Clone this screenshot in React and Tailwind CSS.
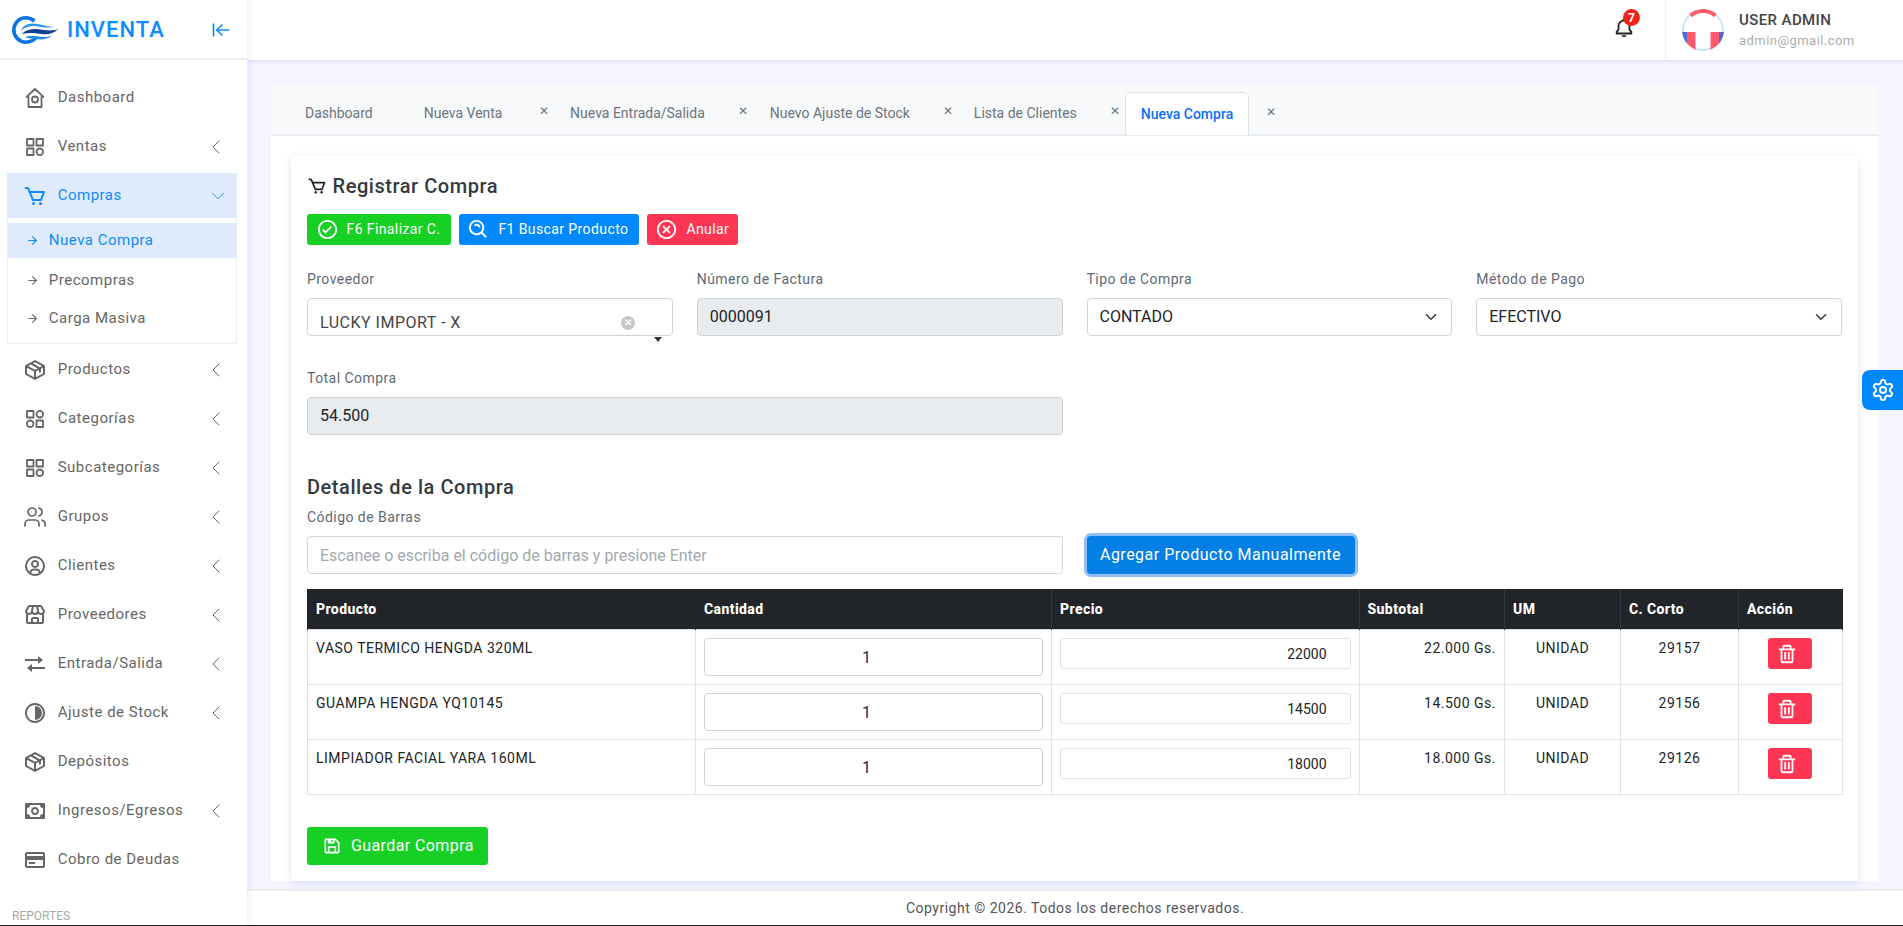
import React from "react";
import { BiCart, BiPackage, BiUserCircle, BiStore, BiTransfer, BiAdjust, BiMoney, BiCreditCard, BiCheckCircle, BiSearchAlt, BiXCircle, BiSave, BiTrash, BiBell } from "react-icons/bi";
import { LuChevronLeft, LuChevronDown, LuArrowLeftToLine, LuArrowRight, LuUsers, LuSettings } from "react-icons/lu";

const Stroke = ({ size = 24, className = "", children }) => (
  <svg width={size} height={size} viewBox="0 0 24 24" fill="none" stroke="currentColor" strokeWidth="1.8" strokeLinejoin="round" strokeLinecap="round" className={className}>{children}</svg>
);
const HomeIcon = (p) => (
  <Stroke {...p}>
    <path d="M12 3 3.500 10.800H5.500V21H18.500V10.800H20.500Z" />
    <circle cx="12" cy="13.500" r="3" />
  </Stroke>
);
const CatIcon = (p) => (
  <Stroke {...p}>
    <rect x="4" y="4" width="6.500" height="6.500" />
    <rect x="13.500" y="4" width="6.500" height="6.500" />
    <rect x="4" y="13.500" width="6.500" height="6.500" />
    <circle cx="16.800" cy="16.800" r="3.300" />
  </Stroke>
);
const CatAltIcon = (p) => (
  <Stroke {...p}>
    <rect x="4" y="4" width="6.500" height="6.500" />
    <circle cx="16.800" cy="7.200" r="3.300" />
    <circle cx="7.200" cy="16.800" r="3.300" />
    <rect x="13.500" y="13.500" width="6.500" height="6.500" />
  </Stroke>
);
const UsersIcon = (p) => <LuUsers {...p} strokeWidth={1.7} />;

const Logo = () => (
  <svg width="46" height="28" viewBox="0 0 46 28" fill="none">
    <path d="M22.500 5C19.500 2.500 16.500 1.800 14 1.800 6.800 1.800 1.800 7.500 1.800 14c0 6.800 5.500 12.200 12.200 12.200 4 0 7.500-1.500 10-4.500" stroke="#0a74e6" strokeWidth="3.600" />
    <path d="M9 14.500c1.500-4 5.500-7 11.500-7 7 0 13 3 21 3.500-5 1.200-10.500 .4-15.500-.5C21 9.500 15 10 9 14.500z" fill="#2f93ec" />
    <path d="M9.500 18c6.500-5.500 13.500-5.500 20.500-4.300 5.500 .9 10.500 1.300 16-.4-4 4-10 5.500-16 4.800-7-.8-13-1.800-20.500-.1z" fill="#123f8c" />
    <path d="M13 21.300c6-2 11-1 17-.3 4 .4 7 0 10-1.200-4 3-9 4-14 3.500-5-.5-9-1-13-2z" fill="#1b87e6" />
  </svg>
);

const Avatar = () => (
  <svg width="42" height="42" viewBox="0 0 42 42" className="shrink-0">
    <defs><clipPath id="av"><circle cx="21" cy="21" r="21" /></clipPath></defs>
    <g clipPath="url(#av)">
      <rect width="42" height="42" fill="#fff" />
      <circle cx="21" cy="21" r="20" fill="none" stroke="#c5e1fb" strokeWidth="1.800" />
      <path d="M8.500 6.500 A 19 19 0 0 1 33.500 6.500" fill="none" stroke="#ff5b6c" strokeWidth="4.500" />
      <rect x="0" y="23" width="5" height="19" fill="#5468d4" />
      <rect x="37" y="23" width="5" height="19" fill="#5468d4" />
      <rect x="5" y="23" width="8.500" height="19" fill="#ff5b6c" />
      <rect x="28.500" y="23" width="8.500" height="19" fill="#ff5b6c" />
    </g>
  </svg>
);

const menu = [
  ["Dashboard", HomeIcon, false],
  ["Ventas", CatIcon, true],
];
const menu2 = [
  ["Productos", BiPackage, true],
  ["Categorías", CatAltIcon, true],
  ["Subcategorías", CatIcon, true],
  ["Grupos", UsersIcon, true],
  ["Clientes", BiUserCircle, true],
  ["Proveedores", BiStore, true],
  ["Entrada/Salida", BiTransfer, true],
  ["Ajuste de Stock", BiAdjust, true],
  ["Depósitos", BiPackage, false],
  ["Ingresos/Egresos", BiMoney, true],
  ["Cobro de Deudas", BiCreditCard, false],
];

const Item = ({ label, Icon, arrow }) => (
  <div className="flex h-[49px] items-center pl-[23px] pr-[19.500px] text-[15px] tracking-[0.5px] text-[#666]">
    <Icon size={24} className="mr-[10.700px] shrink-0 text-[#666]" />
    <span className="flex-1">{label}</span>
    {arrow && <LuChevronLeft size={24} strokeWidth={1} />}
  </div>
);

const Sub = ({ label, active }) => (
  <div className={`flex items-center pl-[18.300px] text-[15px] tracking-[0.5px] ${active ? "mb-[3px] h-[35px] bg-[#dfebfd] text-[#0d8bff]" : "h-[38px] text-[#666]"}`}>
    <LuArrowRight size={13} className="mr-[9.500px]" />
    {label}
  </div>
);

const Sidebar = () => (
  <aside className="z-20 flex w-[247px] shrink-0 flex-col overflow-hidden bg-white shadow-[2px_0_6px_rgba(90,90,200,0.1)]">
    <div className="flex h-[60px] shrink-0 items-center border-b-2 border-[#eceef2] pl-[12px] pr-[12px] pt-[1px]">
      <Logo />
      <span className="ml-[9px] flex-1 text-[22px] font-medium tracking-[1px] text-[#0d8bff]">INVENTA</span>
      <LuArrowLeftToLine size={20} className="mr-[4.500px] text-[#0d8bff]" />
    </div>
    <div className="flex-1 overflow-hidden pt-[13px]">
      {menu.map(([l, I, a]) => <Item key={l} label={l} Icon={I} arrow={a} />)}
      <div className="ml-[7px] mr-[10px] mt-[2px] flex h-[45px] items-center bg-[#dfebfd] pl-[16px] pr-[8.500px] text-[15px] tracking-[0.5px] text-[#0d8bff]">
        <BiCart size={24} className="mr-[10.700px]" />
        <span className="flex-1">Compras</span>
        <LuChevronDown size={22} strokeWidth={1} />
      </div>
      <div className="mb-[1px] ml-[7px] mr-[10px] border-x border-b border-[#eceef2] pb-[6px] pt-[5px]">
        <Sub label="Nueva Compra" active />
        <Sub label="Precompras" />
        <Sub label="Carga Masiva" />
      </div>
      {menu2.map(([l, I, a]) => <Item key={l} label={l} Icon={I} arrow={a} />)}
      <div className="mt-[23px] pl-[12px] text-[12px] text-[#a9a9a9]">REPORTES</div>
    </div>
  </aside>
);

const Header = () => (
  <header className="z-10 flex h-[60px] shrink-0 items-center justify-end bg-white shadow-[0_2px_4px_rgba(90,90,220,0.12)]">
    <div className="relative -mt-[4px] mr-[30px] text-[#222]">
      <BiBell size={22} />
      <span className="absolute -right-[5px] -top-[8px] flex h-[17px] w-[17px] items-center justify-center rounded-full bg-[#f3221b] text-[12px] font-bold text-white">7</span>
    </div>
    <div className="flex h-full w-[238px] items-center border-l border-[#eceef2] pl-[16px]">
      <Avatar />
      <div className="ml-[15px]">
        <div className="text-[15px] font-medium leading-[21px] tracking-[0.4px] text-[#444]">USER ADMIN</div>
        <div className="text-[13px] leading-[20px] tracking-[0.45px] text-[#adadad]">admin@gmail.com</div>
      </div>
    </div>
  </header>
);

const tabs = [
  ["Dashboard", null, "mr-[19px]"],
  ["Nueva Venta", "-right-[35.500px]", "mr-[35.600px]"],
  ["Nueva Entrada/Salida", "-right-[32px]", "mr-[33px]"],
  ["Nuevo Ajuste de Stock", "-right-[32px]", "mr-[32px]"],
  ["Lista de Clientes", "-right-[32px]", "mr-[32px]"],
];

const Tabs = () => (
  <div className="flex h-[52px] items-end border-b-2 border-[#e9ecf1] bg-[#f8f9fb] pl-[18px] text-[14px] text-[#6c757d]">
    {tabs.map(([t, c, m]) => (
      <div key={t} className={`relative flex h-[42px] items-center px-[16px] pt-[1px] ${m}`}>
        {t}
        {c && <span className={`absolute top-[12px] w-[20px] text-center text-[12px] leading-[14px] text-[#6c757d] ${c}`}>✕</span>}
      </div>
    ))}
    <div className="relative -mb-[1px] flex h-[43px] items-center rounded-t-[5px] border border-b-0 border-[#dee2e6] bg-white px-[15px] text-[14px] font-medium text-[#0d6efd]">
      Nueva Compra
      <span className="absolute -right-[33px] top-[12px] w-[20px] text-center text-[12px] font-normal leading-[14px] text-[#6c757d]">✕</span>
    </div>
  </div>
);

const Btn = ({ Icon, label, color, pr = "pr-[10.500px]" }) => (
  <button className={`flex h-[31px] items-center rounded-[3px] pl-[8.500px] text-[14px] tracking-[0.4px] text-white ${pr} ${color}`}>
    <Icon size={23} className="mr-[8px]" />
    {label}
  </button>
);

const Label = ({ children, className = "" }) => (
  <div className={`text-[14px] leading-[21px] tracking-[0.45px] text-[#5f6a75] ${className}`}>{children}</div>
);

const Input = ({ value, disabled }) => (
  <input readOnly value={value} className={`block h-[38px] w-full rounded-[4px] border border-[#ced4da] px-[12px] pb-[2px] text-[16px] leading-[24px] text-[#212529] outline-none ${disabled ? "bg-[#e9ecef]" : "bg-white"}`} />
);

const Select = ({ value }) => (
  <div className="flex h-[38px] items-center justify-between rounded-[4px] border border-[#ced4da] bg-white pl-[12px] pr-[11px] text-[16px] text-[#212529]">
    {value}
    <LuChevronDown size={18} strokeWidth={2} className="text-[#343a40]" />
  </div>
);

const rows = [
  ["VASO TERMICO HENGDA 320ML", "22000", "22.000 Gs.", "29157"],
  ["GUAMPA HENGDA YQ10145", "14500", "14.500 Gs.", "29156"],
  ["LIMPIADOR FACIAL YARA 160ML", "18000", "18.000 Gs.", "29126"],
];

const Table = () => (
  <table className="mt-[14.500px] w-full table-fixed border-collapse text-[14px] tracking-[0.5px] text-[#212529]">
    <colgroup>
      <col className="w-[388px]" /><col className="w-[356px]" /><col className="w-[307.500px]" /><col className="w-[145.500px]" /><col className="w-[116px]" /><col className="w-[118px]" /><col className="w-[103.500px]" />
    </colgroup>
    <thead>
      <tr className="h-[41px] bg-[#212529] text-left text-white">
        {["Producto", "Cantidad", "Precio", "Subtotal", "UM", "C. Corto", "Acción"].map((h) => (
          <th key={h} className="border-x border-[#32383e] px-[8px] pt-[1px] font-extrabold tracking-[0.4px] first:border-[#212529] last:border-[#212529]">{h}</th>
        ))}
      </tr>
    </thead>
    <tbody>
      {rows.map(([p, price, sub, code]) => (
        <tr key={code} className="h-[55px]">
          <td className="border border-[#dee2e6] px-[8px] pb-[15px] pt-[8px] align-top">{p}</td>
          <td className="border border-[#dee2e6] px-[8px] pb-[8px] pt-[8px] align-top">
            <input readOnly value="1" className="block h-[38px] w-full rounded-[4px] border border-[#ced4da] bg-white pr-[14px] text-center text-[16px] tracking-normal text-[#1f2d4d] outline-none" />
          </td>
          <td className="border border-[#dee2e6] px-[8px] pb-[15px] pt-[8px] align-top">
            <input readOnly value={price} className="block h-[31px] w-full rounded-[3px] border border-[#dee2e6] bg-white pr-[23px] text-right text-[14px] tracking-normal text-[#212529] outline-none" />
          </td>
          <td className="border border-[#dee2e6] px-[8px] pb-[15px] pt-[8px] text-right align-top">{sub}</td>
          <td className="border border-[#dee2e6] px-[8px] pb-[15px] pt-[8px] text-center align-top">UNIDAD</td>
          <td className="border border-[#dee2e6] px-[8px] pb-[15px] pt-[8px] text-center align-top">{code}</td>
          <td className="border border-[#dee2e6] px-[8px] pb-[15px] pt-[8px] align-top">
            <button className="mx-auto flex h-[31px] w-[44px] items-center justify-center rounded-[3px] bg-[#ff3554] pr-[6px] text-white"><BiTrash size={22} /></button>
          </td>
        </tr>
      ))}
    </tbody>
  </table>
);

export default function App() {
  return (
    <div className="flex h-[926px] w-full flex-col overflow-hidden bg-[#f5f5ff] font-['Roboto',sans-serif]">
      <div className="flex min-h-0 flex-1">
        <Sidebar />
        <div className="flex min-w-0 flex-1 flex-col">
          <Header />
          <main className="min-h-0 flex-1 overflow-hidden pl-[24px] pr-[25px] pt-[24px]">
            <div className="rounded-t-[6px] bg-white">
              <Tabs />
              <div className="p-[20px] pb-0">
                <section className="h-[725px] rounded-[4px] bg-white px-[16px] pt-[18px] shadow-[0_2px_8px_rgba(90,90,220,0.18)]">
                  <h2 className="flex h-[24px] items-center text-[20px] font-medium leading-[24px] tracking-[0.55px] text-[#343a40]">
                    <BiCart size={20} className="mr-[5.500px] text-[#212529]" />
                    Registrar Compra
                  </h2>
                  <div className="mt-[16px] flex gap-[8px]">
                    <Btn Icon={BiCheckCircle} label="F6 Finalizar C." color="bg-[#16d123]" />
                    <Btn Icon={BiSearchAlt} label="F1 Buscar Producto" color="bg-[#0089ff]" />
                    <Btn Icon={BiXCircle} label="Anular" color="bg-[#ff3554]" pr="pr-[9px]" />
                  </div>
                  <div className="mt-[24px] grid grid-cols-4 gap-x-[24px]">
                    <div>
                      <Label className="mb-[8px]">Proveedor</Label>
                      <div className="relative flex h-[38px] items-end justify-between rounded-[4px] border border-[#ced4da] bg-white pl-[12px] pr-[37px] text-[16px] tracking-[0.5px] text-[#444]">
                        LUCKY IMPORT - X
                        <span className="mb-[5px] flex h-[14px] w-[14px] items-center justify-center rounded-full bg-[#c7c7c7] text-[10px] font-bold leading-none tracking-normal text-white">✕</span>
                        <span className="absolute -bottom-[7px] right-[10px] h-0 w-0 border-x-[4px] border-t-[5px] border-x-transparent border-t-[#333]"></span>
                      </div>
                    </div>
                    <div>
                      <Label className="mb-[8px]">Número de Factura</Label>
                      <Input value="0000091" disabled />
                    </div>
                    <div>
                      <Label className="mb-[8px]">Tipo de Compra</Label>
                      <Select value="CONTADO" />
                    </div>
                    <div>
                      <Label className="mb-[8px]">Método de Pago</Label>
                      <Select value="EFECTIVO" />
                    </div>
                  </div>
                  <div className="mt-[32px] grid grid-cols-2 gap-x-[24px]">
                    <div>
                      <Label className="mb-[8px]">Total Compra</Label>
                      <Input value="54.500" disabled />
                    </div>
                  </div>
                  <h3 className="mt-[40px] text-[20px] font-medium leading-[24px] tracking-[0.55px] text-[#343a40]">Detalles de la Compra</h3>
                  <Label className="mt-[8px]">Código de Barras</Label>
                  <div className="mt-[8px] grid grid-cols-2 items-center gap-x-[24px]">
                    <input readOnly placeholder="Escanee o escriba el código de barras y presione Enter" className="block h-[38px] w-full rounded-[4px] border border-[#ced4da] bg-white px-[12px] text-[16px] outline-none placeholder:text-[#a3a8ae]" />
                    <button className="h-[38px] w-[268px] rounded-[4px] bg-[#047fe6] text-[16px] tracking-[0.5px] text-white ring-[3px] ring-[#92bdf7]">Agregar Producto Manualmente</button>
                  </div>
                  <Table />
                  <button className="mt-[32px] flex h-[38px] items-center rounded-[3px] bg-[#16d123] pl-[15px] pr-[14px] text-[16px] tracking-[0.4px] text-white">
                    <BiSave size={20} className="mr-[9px]" />
                    Guardar Compra
                  </button>
                </section>
              </div>
            </div>
          </main>
          <footer className="z-10 flex h-[36px] shrink-0 items-center justify-center border-t-2 border-[#e9ecef] bg-white text-[14px] tracking-[0.5px] text-[#555]">
            Copyright © 2026. Todos los derechos reservados.
          </footer>
        </div>
      </div>
      <div className="h-px shrink-0 bg-[#222]"></div>
      <div className="fixed right-0 top-[370px] z-30 flex h-[40px] w-[41px] items-center justify-center rounded-l-[8px] bg-[#0089ff] text-white">
        <LuSettings size={24} />
      </div>
    </div>
  );
}
